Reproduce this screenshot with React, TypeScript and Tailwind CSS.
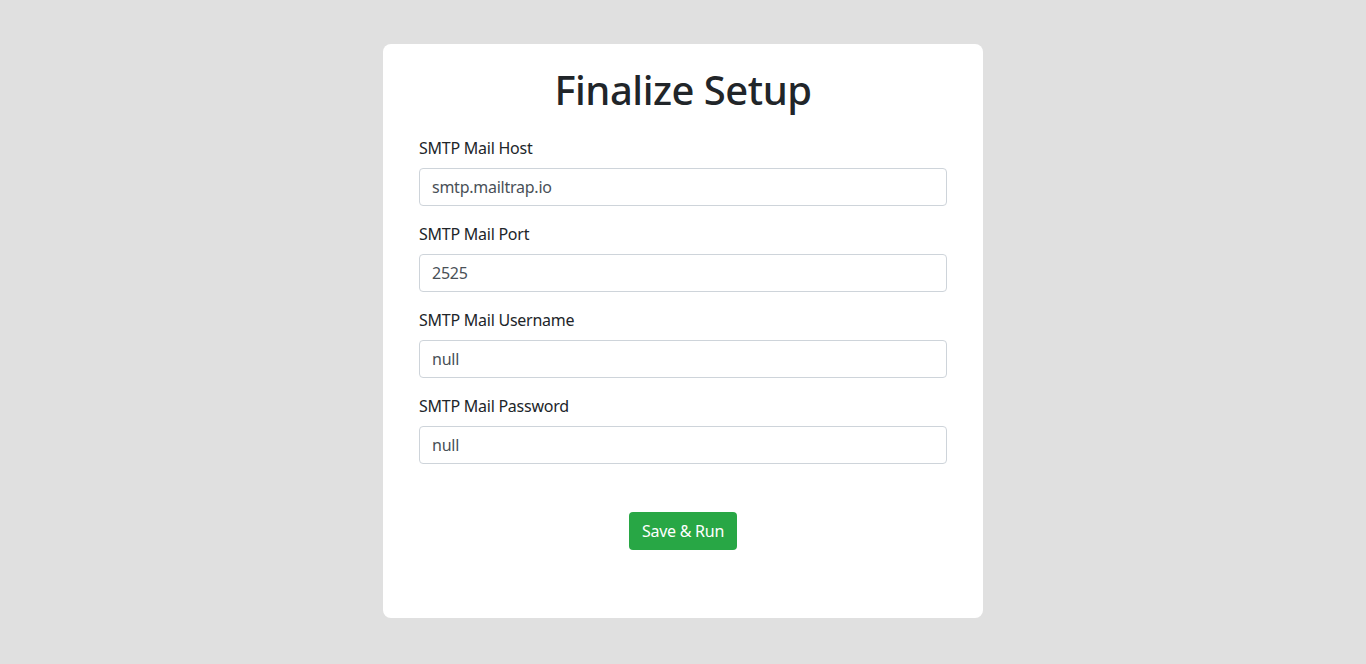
import { useState } from 'react'

const fields = [
  { label: 'SMTP Mail Host', value: 'smtp.mailtrap.io' },
  { label: 'SMTP Mail Port', value: '2525' },
  { label: 'SMTP Mail Username', value: 'null' },
  { label: 'SMTP Mail Password', value: 'null' },
]

export default function App() {
  const [values, setValues] = useState(fields.map(f => f.value))

  return (
    <div
      className="min-h-[664px] bg-[#e0e0e0] pt-[44px] tracking-[-0.25px] text-[#212529]"
      style={{ fontFamily: '"Noto Sans", "Open Sans", sans-serif' }}
    >
      <div className="mx-auto w-[600px] rounded-lg bg-white px-9 pt-[22px] pb-[68px]">
        <h1 className="mb-[22px] text-center text-[40px] font-medium leading-[48px] tracking-[-0.5px]">Finalize Setup</h1>
        <form onSubmit={e => e.preventDefault()}>
          {fields.map((f, i) => (
            <div key={f.label} className="mb-4">
              <label className="mb-2 block text-base leading-6">{f.label}</label>
              <input
                type="text"
                value={values[i]}
                onChange={e => setValues(values.map((v, j) => (j === i ? e.target.value : v)))}
                className="block h-[38px] w-full rounded border border-[#ced4da] px-3 text-base tracking-[-0.25px] text-[#495057] outline-none"
              />
            </div>
          ))}
          <div className="flex justify-center pt-8">
            <button
              type="submit"
              className="h-[38px] w-[108px] rounded bg-[#28a745] text-base tracking-[-0.25px] text-white"
            >
              Save &amp; Run
            </button>
          </div>
        </form>
      </div>
    </div>
  )
}
